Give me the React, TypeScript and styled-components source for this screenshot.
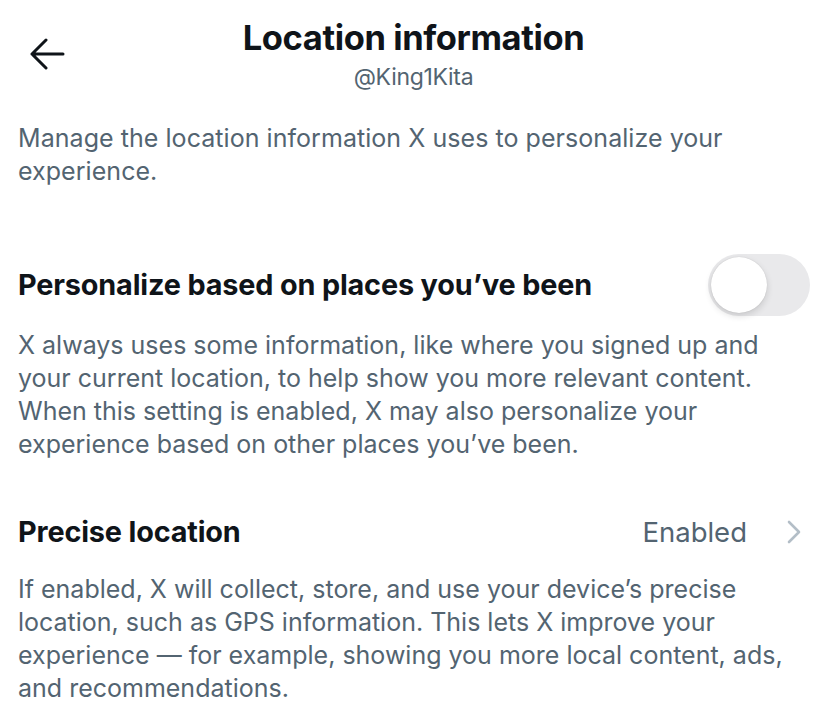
import styled, { createGlobalStyle } from "styled-components";

const GlobalStyle = createGlobalStyle`
  html, body {
    margin: 0;
    padding: 0;
    background: #ffffff;
  }
  body {
    font-family: Inter, "Noto Sans", "Liberation Sans", sans-serif;
    color: #0f1419;
    -webkit-font-smoothing: antialiased;
  }
`;

const Page = styled.div`
  width: 827px;
  height: 710px;
  overflow: hidden;
  background: #fff;
`;

const Header = styled.header`
  display: grid;
  grid-template-columns: 90px 1fr 90px;
  align-items: start;
  padding-top: 16px;
`;

const BackButton = styled.button`
  border: none;
  background: none;
  padding: 0;
  margin: 22px 0 0 29px;
  width: 40px;
  height: 32px;
  display: flex;
  align-items: center;
  color: #0f1419;
`;

const TitleBlock = styled.div`
  display: flex;
  flex-direction: column;
  align-items: center;
`;

const Title = styled.h1`
  margin: 0;
  font-size: 34.5px;
  font-weight: 700;
  line-height: 44px;
  letter-spacing: -0.4px;
`;

const Handle = styled.div`
  margin-top: 2px;
  font-size: 23px;
  line-height: 30px;
  color: #536471;
  letter-spacing: -0.3px;
`;

const Text = styled.p`
  margin: 0;
  font-size: 25px;
  line-height: 33px;
  color: #536471;
`;

const Intro = styled(Text)`
  padding: 0 18px;
  letter-spacing: 0.05px;
`;

const Section = styled.section`
  padding: 0 17px 0 18px;
`;

const SettingRow = styled.div`
  display: flex;
  align-items: center;
  justify-content: space-between;
  height: 62px;
`;

const SettingTitle = styled.h2`
  margin: 0;
  font-size: 28.8px;
  font-weight: 700;
  line-height: 36px;
  letter-spacing: -0.15px;
`;

const Toggle = styled.div<{ $on?: boolean }>`
  width: 102px;
  height: 62px;
  border-radius: 31px;
  background: ${(p) => (p.$on ? "#1d9bf0" : "#e9e9eb")};
  display: flex;
  align-items: center;
  justify-content: ${(p) => (p.$on ? "flex-end" : "flex-start")};
  padding: 3px;
  box-sizing: border-box;
`;

const Knob = styled.div`
  width: 56px;
  height: 56px;
  border-radius: 50%;
  background: #fff;
  box-shadow: 0 3px 7px rgba(0, 0, 0, 0.14), 0 0 1px rgba(0, 0, 0, 0.18);
`;

const Value = styled.div`
  display: flex;
  align-items: center;
  gap: 40px;
  font-size: 27.5px;
  color: #536471;
  padding-right: 9px;
`;

const Spacer = styled.div<{ $h: number }>`
  height: ${(p) => p.$h}px;
`;

const ArrowLeft = () => (
  <svg width="36" height="32" viewBox="0 0 36 32" fill="none">
    <path
      d="M34 16H3M17 2L3 16l14 14"
      stroke="currentColor"
      strokeWidth="3"
      strokeLinecap="round"
      strokeLinejoin="round"
    />
  </svg>
);

const Chevron = () => (
  <svg width="14" height="24" viewBox="0 0 14 24" fill="none">
    <path
      d="M2 2l10 10L2 22"
      stroke="#b3bec7"
      strokeWidth="2.6"
      strokeLinecap="round"
      strokeLinejoin="round"
    />
  </svg>
);

export default function App() {
  return (
    <Page>
      <GlobalStyle />
      <Header>
        <BackButton aria-label="Back">
          <ArrowLeft />
        </BackButton>
        <TitleBlock>
          <Title>Location information</Title>
          <Handle>@King1Kita</Handle>
        </TitleBlock>
        <div />
      </Header>

      <Spacer $h={30} />
      <Intro>
        Manage the location information X uses to personalize your
        <br />
        experience.
      </Intro>

      <Spacer $h={66} />
      <Section>
        <SettingRow>
          <SettingTitle>Personalize based on places you’ve been</SettingTitle>
          <Toggle>
            <Knob />
          </Toggle>
        </SettingRow>
        <Spacer $h={13} />
        <Text>
          X always uses some information, like where you signed up and
          <br />
          your current location, to help show you more relevant content.
          <br />
          When this setting is enabled, X may also personalize your
          <br />
          experience based on other places you’ve been.
        </Text>
      </Section>

      <Spacer $h={40} />
      <Section>
        <SettingRow>
          <SettingTitle>Precise location</SettingTitle>
          <Value>
            Enabled
            <Chevron />
          </Value>
        </SettingRow>
        <Spacer $h={10} />
        <Text>
          If enabled, X will collect, store, and use your device’s precise
          <br />
          location, such as GPS information. This lets X improve your
          <br />
          experience — for example, showing you more local content, ads,
          <br />
          and recommendations.
        </Text>
      </Section>
    </Page>
  );
}
